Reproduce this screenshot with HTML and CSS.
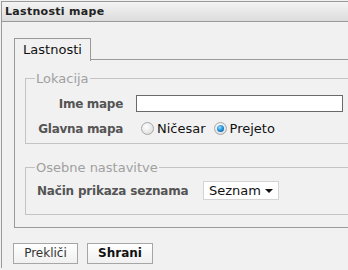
FILE: index.html
```html
<!DOCTYPE html>
<html>
<head>
<meta charset="utf-8">
<link rel="stylesheet" href="styles.css">
</head>
<body>
<div class="window">
  <div class="titlebar">Lastnosti mape</div>
  <div class="content">
    <div class="tabs"><div class="tab">Lastnosti</div><div class="tabline"></div></div>
    <div class="panel">
      <fieldset class="fs fs1">
        <legend>Lokacija</legend>
        <div class="row">
          <div class="lbl">Ime mape</div>
          <div class="input"></div>
        </div>
        <div class="row">
          <div class="lbl">Glavna mapa</div>
          <div class="radios">
            <span class="radio"></span><span class="rtext">Ničesar</span>
            <span class="radio checked"></span><span class="rtext">Prejeto</span>
          </div>
        </div>
      </fieldset>
      <fieldset class="fs fs2">
        <legend>Osebne nastavitve</legend>
        <div class="row2">
          <div class="lbl2">Način prikaza seznama</div>
          <div class="select"><span>Seznam</span><span class="arrow"></span></div>
        </div>
      </fieldset>
    </div>
    <div class="buttons">
      <div class="btn">Prekliči</div>
      <div class="btn bold">Shrani</div>
    </div>
  </div>
</div>
</body>
</html>
```
FILE: styles.css
```css
html, body {
  margin: 0;
  padding: 0;
  background: #f1f1f1;
  overflow: hidden;
  width: 348px;
  height: 270px;
}
body {
  font-family: "DejaVu Sans", Verdana, sans-serif;
  font-size: 12px;
  color: #111;
}
.window {
  margin: 1px 0 0 1px;
  border-top: 1px solid #9a9a9a;
  border-left: 1px solid #9a9a9a;
  height: 266px;
  overflow: hidden;
}
.titlebar {
  height: 19px;
  line-height: 19px;
  padding-left: 3px;
  font-weight: bold;
  font-size: 11px;
  letter-spacing: 0.3px;
  color: #222;
  background: linear-gradient(#f4f4f4, #e8e8e8 50%, #dcdcdc);
  border-bottom: 1px solid #9a9a9a;
}
.content {
  padding: 15px 0 0 12px;
}
.tabs {
  display: flex;
  align-items: flex-end;
}
.tab {
  width: 75px;
  height: 22px;
  line-height: 22px;
  border: 1px solid #9a9a9a;
  border-bottom: none;
  text-align: center;
  font-size: 13px;
  color: #111;
  background: #f1f1f1;
  position: relative;
  top: 1px;
}
.tabline {
  flex: 1;
  border-bottom: 1px solid #9a9a9a;
}
.panel {
  border-left: 1px solid #9a9a9a;
  border-bottom: 1px solid #9a9a9a;
  padding: 12px 0 12px 10px;
}
.fs {
  margin: 0;
  border: 1px solid #c4c4c4;
  border-right: none;
  padding: 0 0 0 11px;
  min-width: 0;
}
.fs legend {
  color: #a0a0a0;
  font-size: 13px;
  padding: 0 1px;
  margin-left: -2px;
  line-height: 13px;
}
.fs1 {
  height: 64px;
  padding-top: 6px;
}
.fs2 {
  margin-top: 17px;
  height: 49px;
  padding-top: 3px;
}
.row {
  display: flex;
  align-items: center;
  height: 25px;
}
.lbl {
  width: 86px;
  flex-shrink: 0;
  display: flex;
  justify-content: flex-end;
  white-space: nowrap;
  font-weight: bold;
  color: #555;
  font-size: 12px;
  letter-spacing: -0.3px;
  margin-right: 13px;
}
.input {
  width: 205px;
  height: 15px;
  border: 1px solid #6a6a6a;
  background: #fff;
  flex-shrink: 0;
}
.radios {
  display: flex;
  align-items: center;
  font-size: 13px;
  margin-left: 5px;
}
.radio {
  width: 11px;
  height: 11px;
  border-radius: 50%;
  border: 1px solid #a8a8a8;
  background: radial-gradient(circle at 40% 35%, #fff, #e2e2e2 70%, #cfcfcf);
  margin-right: 3px;
  position: relative;
}
.radio.checked::after {
  content: "";
  position: absolute;
  left: 2px;
  top: 2px;
  width: 7px;
  height: 7px;
  border-radius: 50%;
  background: radial-gradient(circle at 40% 35%, #9fdcff, #1d8fd8 50%, #0b4e8a);
}
.rtext {
  margin-right: 8px;
}
.row2 {
  display: flex;
  align-items: center;
  height: 27px;
}
.lbl2 {
  font-weight: bold;
  color: #555;
  font-size: 12px;
  letter-spacing: -0.2px;
  width: 166px;
  white-space: nowrap;
}
.select {
  width: 69px;
  height: 17px;
  border: 1px solid #d4d4d4;
  background: #fff;
  display: flex;
  align-items: center;
  padding-left: 5px;
  font-size: 13px;
  color: #111;
}
.select span:first-child {
  flex: 1;
}
.arrow {
  width: 0;
  height: 0;
  border-left: 4px solid transparent;
  border-right: 4px solid transparent;
  border-top: 4px solid #111;
  margin-right: 5px;
}
.buttons {
  display: flex;
  gap: 9px;
  margin-top: 15px;
  margin-left: -1px;
}
.btn {
  width: 63px;
  height: 19px;
  line-height: 19px;
  text-align: center;
  border: 1px solid #a6a6a6;
  background: linear-gradient(#ffffff, #f0f0f0);
  font-size: 12px;
  color: #333;
}
.btn.bold {
  font-weight: bold;
  color: #111;
  width: 64px;
}
```
